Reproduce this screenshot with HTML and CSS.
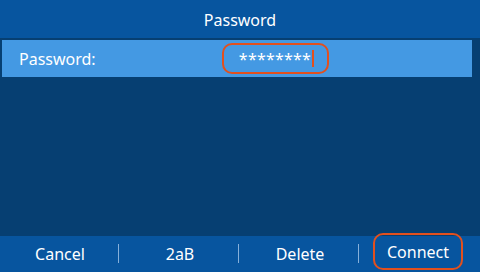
FILE: index.html
```html
<!DOCTYPE html>
<html lang="en">
<head>
    <meta charset="UTF-8">
    <title>Password</title>
    <link rel="stylesheet" href="styles.css">
</head>
<body>
    <div class="screen">
        <div class="title-bar">Password</div>
        <div class="content">
            <div class="field-row">
                <span class="field-label">Password:</span>
                <div class="field-input">
                    <span class="field-value">********</span>
                    <span class="cursor"></span>
                </div>
            </div>
        </div>
        <div class="softkeys">
            <div class="softkey">Cancel</div>
            <div class="softkey">2aB</div>
            <div class="softkey">Delete</div>
            <div class="softkey">
                <span class="softkey-focus">Connect</span>
            </div>
        </div>
    </div>
</body>
</html>
```

FILE: styles.css
```css
* {
    box-sizing: border-box;
    margin: 0;
    padding: 0;
}

body {
    width: 480px;
    height: 272px;
    overflow: hidden;
    font-family: 'Noto Sans', 'Open Sans', sans-serif;
    color: #fff;
    background-color: #063f72;
}

.screen {
    display: flex;
    flex-direction: column;
    height: 272px;
}

.title-bar {
    height: 38px;
    background-color: #07559f;
    text-align: center;
    font-size: 16px;
    line-height: 40px;
}

.content {
    flex: 1;
    padding: 2px 8px 0 2px;
}

.field-row {
    display: flex;
    align-items: center;
    height: 37px;
    background-color: #4499e3;
    padding-left: 17px;
}

.field-label {
    width: 203px;
    font-size: 16px;
}

.field-input {
    display: flex;
    align-items: center;
    justify-content: flex-end;
    width: 107px;
    height: 31px;
    border: 2.5px solid #e2501e;
    border-radius: 10px;
    padding-right: 13px;
}

.field-value {
    font-size: 16px;
    letter-spacing: 0.2px;
}

.cursor {
    width: 2px;
    height: 17px;
    background-color: #e2501e;
    margin-left: 1px;
}

.softkeys {
    display: flex;
    height: 36px;
    background-color: #07559f;
}

.softkey {
    position: relative;
    flex: 1;
    display: flex;
    align-items: center;
    justify-content: center;
    font-size: 16px;
    padding-bottom: 1px;
}

.softkey + .softkey::before {
    content: '';
    position: absolute;
    left: -2px;
    top: 8px;
    width: 1px;
    height: 19px;
    background-color: #86b0da;
}

.softkey-focus {
    position: absolute;
    left: 13px;
    top: -3px;
    width: 90px;
    height: 37px;
    display: flex;
    align-items: center;
    justify-content: center;
    border: 2.5px solid #e2501e;
    border-radius: 10px;
}
```
